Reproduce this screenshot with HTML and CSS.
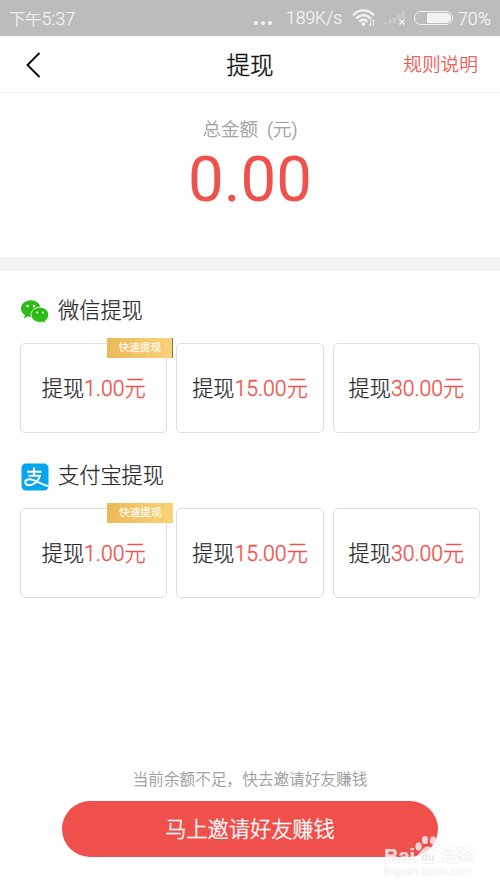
FILE: index.html
```
<!DOCTYPE html>
<html lang="zh-CN">
<head>
    <meta charset="UTF-8">
    <meta name="viewport" content="width=device-width, initial-scale=1.0">
    <title>提现</title>
    <link rel="stylesheet" href="styles.css">
</head>
<body>
    <div class="status-bar">
        <span class="time">下午<span>5:37</span></span>
        <span class="dots"><i></i><i></i><i></i></span>
        <span class="speed">189K/s</span>
        <svg class="wifi" width="24" height="18" viewBox="0 0 24 18">
            <g fill="none" stroke="#f3f3f3" stroke-width="2.2">
                <path d="M1 6.2C7-.2 16-.2 22 6.2"/>
                <path d="M4.2 9.6C8.5 5 14.5 5 18.8 9.6"/>
                <path d="M7.4 12.6C10 10 13 10 15.6 12.6"/>
            </g>
            <circle cx="11.5" cy="15" r="1.9" fill="#f3f3f3"/>
            <path d="M18.7 10.5v6.500l-1.500-1.500M21.300 17v-6.500l1.500 1.500" stroke="#f3f3f3" fill="none"/>
        </svg>
        <svg class="signal" width="22" height="18" viewBox="0 0 22 18">
            <path d="M0 13h3v2H0zM4.500 11h3v4h-3zM9 8.500h3V15H9zM13.500 5.500h3V10h-3zM18 2h3v8h-3z" fill="#cacaca"/>
            <path d="M15.500 10.500l5 5M20.500 10.500l-5 5" stroke="#f3f3f3" stroke-width="1.500"/>
        </svg>
        <span class="battery"><i></i></span>
        <span class="percent">70%</span>
    </div>

    <header class="title-bar">
        <svg class="back" width="15" height="28" viewBox="0 0 15 28">
            <path d="M13.500 2L1.500 14l12 12" fill="none" stroke="#111" stroke-width="2"/>
        </svg>
        <h1>提现</h1>
        <a class="rules">规则说明</a>
    </header>

    <section class="balance">
        <p class="balance-label">总金额<span>(元)</span></p>
        <p class="balance-amount">0.00</p>
    </section>

    <section class="method">
        <h2>
            <svg width="28" height="28" viewBox="0 0 28 28">
                <path d="M9.800 2.300C4.400 2.300 0 5.900 0 10.600c0 2.700 1.500 5 3.800 6.400L3 20.400l3.500-1.900c1.400.4 3 .500 4.600.3C15.600 18 19.500 15 19.500 10.600c0-4.700-4.400-8.300-9.700-8.300z" fill="#2dbb17"/>
                <path d="M19 9.200c-5 0-9 3.300-9 7.600s4 7.600 9 7.600c1 0 2-.1 2.900-.4l3.200 1.600-.8-2.800c2.100-1.300 3.400-3.500 3.400-6 0-4.300-4-7.600-8.700-7.600z" fill="#2dbb17" stroke="#fff" stroke-width=".9"/>
                <g fill="#fff"><circle cx="6.500" cy="8" r="1.200"/><circle cx="13" cy="8" r="1.200"/><circle cx="16.200" cy="14.600" r="1"/><circle cx="22" cy="14.600" r="1"/></g>
            </svg>
            <span>微信提现</span>
        </h2>
        <div class="options">
            <div class="option"><span>提现<b>1.00元</b></span><span class="tag tag-edge">快速提现</span></div>
            <div class="option"><span>提现<b>15.00元</b></span></div>
            <div class="option"><span>提现<b>30.00元</b></span></div>
        </div>
    </section>

    <section class="method">
        <h2>
            <svg width="28" height="28" viewBox="0 0 28 28">
                <rect x=".5" y=".5" width="27" height="27" rx="4.500" fill="#06a5ee"/>
                <g fill="none" stroke="#fff" stroke-width="2">
                    <path d="M6 8.800h14.500M13 4.500v8M7.500 12.800h11.300c-1 4-4 7.200-7.500 8.700-3.500 1.300-7 .6-7-2.300 0-2.800 3.800-3.600 7.500-2.300 4 1.400 9 4.300 15.700 6.300"/>
                </g>
            </svg>
            <span>支付宝提现</span>
        </h2>
        <div class="options">
            <div class="option"><span>提现<b>1.00元</b></span><span class="tag">快速提现</span></div>
            <div class="option"><span>提现<b>15.00元</b></span></div>
            <div class="option"><span>提现<b>30.00元</b></span></div>
        </div>
    </section>

    <footer>
        <p>当前余额不足，快去邀请好友赚钱</p>
        <button class="invite">马上邀请好友赚钱</button>
    </footer>

    <div class="watermark">
        <div class="wm-logo">
            <span class="wm-bai">Bai</span>
            <svg width="27" height="29" viewBox="0 0 27 29">
                <g fill="#fff">
                    <ellipse cx="4.500" cy="11.500" rx="3" ry="4"/>
                    <ellipse cx="11" cy="5" rx="3" ry="4"/>
                    <ellipse cx="19" cy="5.500" rx="3" ry="4"/>
                    <ellipse cx="23.500" cy="13" rx="2.800" ry="3.800"/>
                    <path d="M13.500 11.500c4 0 5 3.500 9 7.500 4 4.500 1 9.500-4 9.500h-10c-5 0-7-5.500-4-9.500 4-3.500 5-7.500 9-7.500z"/>
                </g>
                <text x="7" y="26">du</text>
            </svg>
            <span class="wm-cn">经验</span>
        </div>
        <div class="wm-url">jingyan.baidu.com</div>
    </div>
</body>
</html>
```
FILE: styles.css
```
* {
    box-sizing: border-box;
}

body {
    font-family: Roboto, "Noto Sans CJK SC", sans-serif;
    margin: 0;
    background-color: #fff;
    color: #2b2b2b;
    height: 889px;
    display: flex;
    flex-direction: column;
    position: relative;
    overflow: hidden;
    -webkit-text-stroke-width: 0.25px;
}

h1, h2, p {
    margin: 0;
    font-weight: 300;
}

/* Phone status bar */
.status-bar {
    height: 36px;
    background-color: #bcbcbc;
    color: #f3f3f3;
    display: flex;
    align-items: center;
    padding: 0 9px;
    font-size: 17.5px;
    font-weight: 300;
    white-space: nowrap;
}

.time {
    font-size: 16.3px;
    flex: 1;
}

.time span {
    font-size: 18px;
}

.dots {
    display: flex;
    gap: 3px;
    margin: 9px 14px 0 0;
}

.dots i {
    width: 4px;
    height: 4px;
    border-radius: 50%;
    background-color: #f3f3f3;
}

.speed {
    width: 56px;
    margin-right: 10px;
}

.wifi {
    margin-right: 8px;
}

.signal {
    margin: 0 8px 0 0;
}

.battery {
    width: 39px;
    height: 14px;
    border: 1.5px solid #f3f3f3;
    border-radius: 7px;
    padding: 1px;
    margin-right: 5px;
    display: flex;
    justify-content: flex-end;
}

.battery i {
    width: 24px;
    background-color: #f3f3f3;
    border-radius: 1px 5px 5px 1px;
}

.percent {
    width: 33px;
    font-size: 17.8px;
}

/* Title bar */
.title-bar {
    height: 57px;
    border-bottom: 1px solid #f1f1f1;
    display: grid;
    grid-template-columns: 1fr auto 1fr;
    align-items: center;
    padding: 0 22px 0 26px;
}

.back {
    margin-top: 2px;
}

.title-bar h1 {
    font-size: 23.5px;
    color: #111;
    font-weight: 300;
    margin-left: -4px;
    -webkit-text-stroke-width: 0.4px;
}

.rules {
    justify-self: end;
    font-size: 18.7px;
    font-weight: 300;
    color: #ef4f4b;
    padding-bottom: 3px;
}

/* Total amount */
.balance {
    height: 178px;
    border-bottom: 14px solid #f3f4f6;
    text-align: center;
    padding-top: 23px;
}

.balance-label {
    font-size: 18.5px;
    line-height: 28px;
    color: #999;
}

.balance-label span {
    margin-left: 9px;
}

.balance-amount {
    font-size: 63.5px;
    line-height: 71px;
    font-weight: 400;
    color: #ef524d;
    -webkit-text-stroke-width: 0;
}

/* Withdraw methods */
.method {
    height: 165px;
    padding: 24px 20px 0;
}

.method h2 {
    display: flex;
    align-items: center;
    gap: 9px;
    height: 30px;
    font-size: 21.2px;
    padding-left: 1px;
}

.method h2 svg {
    margin-top: 3px;
}

.method h2 span {
    padding-bottom: 4px;
}

.options {
    display: grid;
    grid-template-columns: repeat(3, 1fr);
    gap: 9px;
    margin-top: 18px;
}

.option {
    position: relative;
    height: 90px;
    border: 1.5px solid #dedede;
    border-radius: 5px;
    display: flex;
    align-items: center;
    justify-content: center;
    font-size: 21.2px;
    font-weight: 300;
    padding-bottom: 4px;
}

.option b {
    font-weight: 300;
    color: #ef524d;
    -webkit-text-stroke-width: 0.35px;
}

.tag {
    position: absolute;
    top: -6px;
    right: -7px;
    width: 66px;
    height: 20px;
    background: linear-gradient(90deg, #ecb958, #fad278);
    color: #fff;
    font-size: 10.6px;
    line-height: 19px;
    text-align: center;
}

.tag-edge {
    border-right: 1px solid #8d7040;
}

/* Bottom action */
footer {
    margin-top: auto;
    padding: 0 62px 32px;
    text-align: center;
}

footer p {
    font-size: 15.65px;
    line-height: 24px;
    color: #999;
    margin-bottom: 9px;
}

.invite {
    display: block;
    width: 376px;
    height: 56px;
    border: none;
    border-radius: 28px;
    background-color: #ef504b;
    color: #fff;
    font-family: inherit;
    font-size: 21.2px;
    font-weight: 300;
    padding: 0 0 4px;
    -webkit-text-stroke-width: 0.4px;
}

/* Watermark over the bottom right corner */
.watermark {
    position: absolute;
    left: 384px;
    top: 835px;
    width: 100px;
    color: #fff;
    opacity: 0.75;
    font-family: "Liberation Sans", "Noto Sans CJK SC", sans-serif;
    text-shadow: 0 0 1px #999;
}

.wm-logo {
    display: flex;
    align-items: flex-end;
    height: 29px;
    font-size: 20px;
    line-height: 20px;
    font-weight: bold;
}

.wm-bai {
    width: 30px;
    margin-bottom: -2px;
}

.wm-logo svg {
    flex: none;
    filter: drop-shadow(0 0 0.5px #bbb);
}

.wm-logo text {
    font-size: 11px;
    fill: #ddd;
    text-shadow: none;
}

.wm-cn {
    font-size: 15.5px;
    margin: 0 0 -2px 1px;
}

.wm-url {
    font-size: 10.8px;
    line-height: 14px;
}
```
